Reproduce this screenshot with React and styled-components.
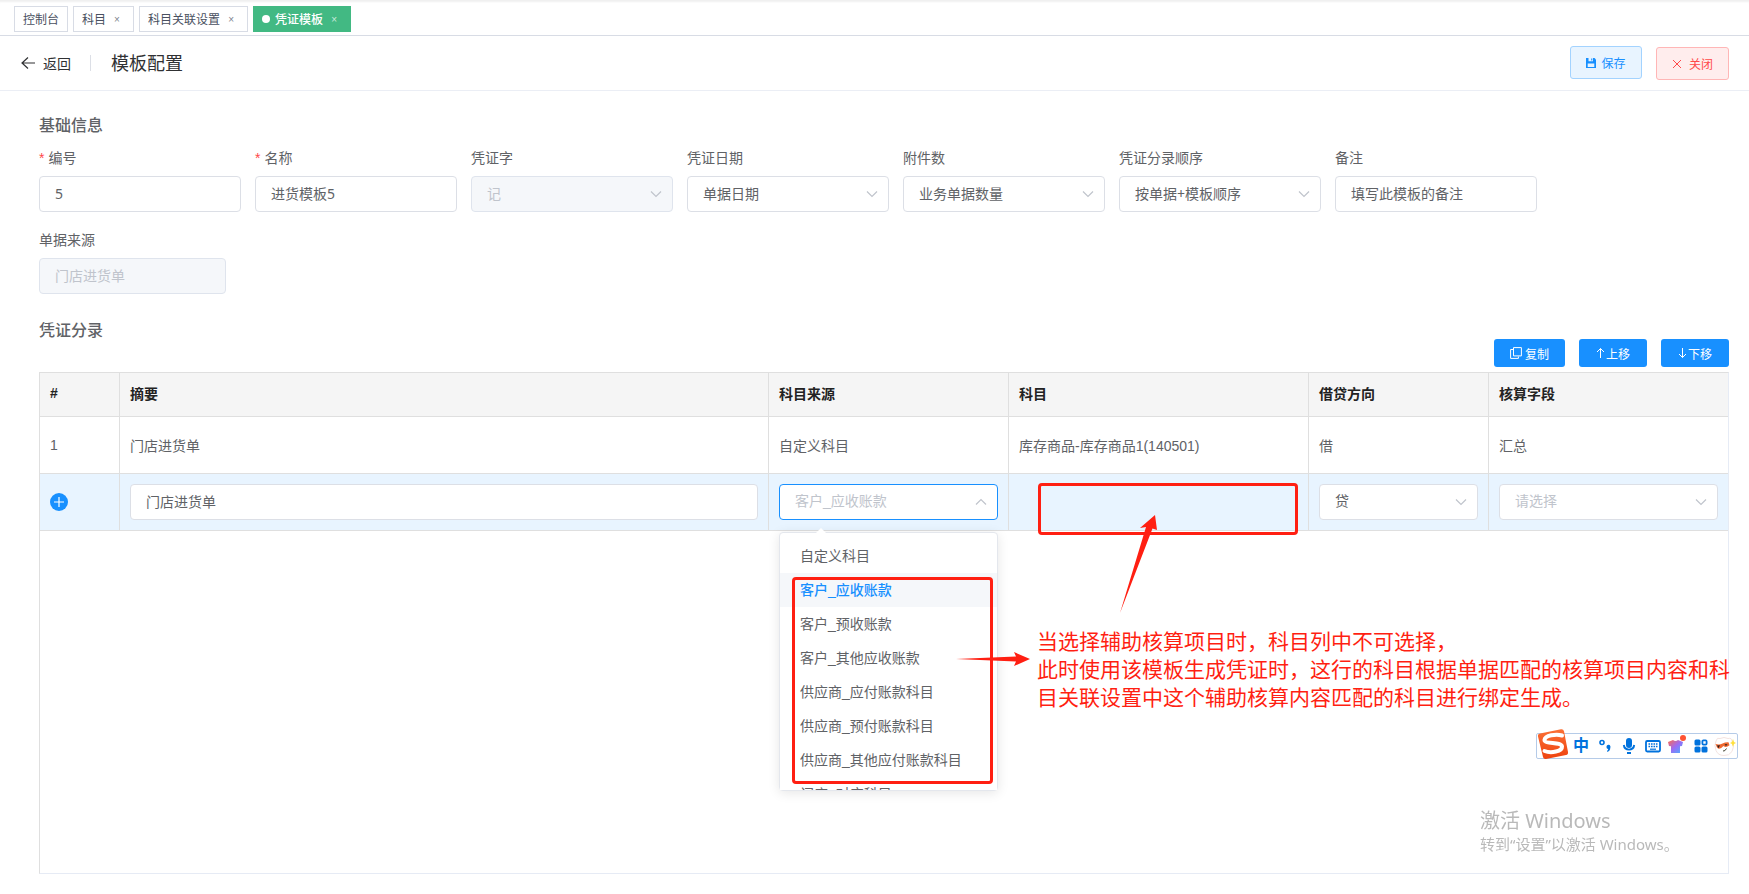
import React, { useState } from "react";
import styled, { createGlobalStyle, css } from "styled-components";

const tabs = [
  { name: "控制台" },
  { name: "科目", closable: true },
  { name: "科目关联设置", closable: true },
  { name: "凭证模板", closable: true, active: true },
];

const fields = [
  { id: "code", label: "编号", value: "5", required: true },
  { id: "name", label: "名称", value: "进货模板5", required: true },
  { id: "word", label: "凭证字", value: "记", type: "select", disabled: true },
  { id: "date", label: "凭证日期", value: "单据日期", type: "select" },
  { id: "attach", label: "附件数", value: "业务单据数量", type: "select" },
  { id: "order", label: "凭证分录顺序", value: "按单据+模板顺序", type: "select" },
  { id: "remark", label: "备注", value: "填写此模板的备注" },
  { id: "source", label: "单据来源", value: "门店进货单", disabled: true },
];

const sources = [
  "自定义科目",
  "客户_应收账款",
  "客户_预收账款",
  "客户_其他应收账款",
  "供应商_应付账款科目",
  "供应商_预付账款科目",
  "供应商_其他应付账款科目",
  "门店_对应科目",
];

const Chevron = ({ up }) => (
  <ChevronIcon viewBox="0 0 12 12" aria-hidden="true">
    <path d={up ? "M1 8.5 6 3.5 11 8.5" : "M1 3.5 6 8.5 11 3.5"} />
  </ChevronIcon>
);

const Select = ({ options, open, muted, ...rest }) => (
  <SelectBox>
    <Control as="select" $open={open} $muted={muted} {...rest}>
      {options.map((option) => (
        <option key={option}>{option}</option>
      ))}
    </Control>
    <Chevron up={open} />
  </SelectBox>
);

const Field = ({ id, label, value, required, disabled, type }) => (
  <FieldBox>
    <Label htmlFor={id}>
      {required && <Star>*</Star>}
      {label}
    </Label>
    {type === "select" ? (
      <Select id={id} options={[value]} disabled={disabled} />
    ) : (
      <Control id={id} defaultValue={value} disabled={disabled} />
    )}
  </FieldBox>
);

const TabsBar = () => (
  <Tabs>
    {tabs.map(({ name, closable, active }) => (
      <Tab key={name} href="#" $active={active}>
        {active && <Dot />}
        {name}
        {closable && <TabClose>×</TabClose>}
      </Tab>
    ))}
  </Tabs>
);

const ImeBar = () => (
  <Ime>
    <svg className="logo" width="32" height="32" viewBox="0 0 32 32">
      <defs>
        <linearGradient id="sogou" x1="0" y1="0" x2="0" y2="1">
          <stop offset="0" stopColor="#fb7035" />
          <stop offset="1" stopColor="#ee4310" />
        </linearGradient>
      </defs>
      <path
        d="M3 5.500 24 1.200q2.400-.400 3 2l4 20.800q.400 2.500-2 3L9 31q-2.500.400-3-2L1 8.500q-.500-2.500 2-3Z"
        fill="url(#sogou)"
      />
      <path
        d="M25 7.500C19 5.500 8 7.500 7.500 12c-.300 4.500 17 1.500 17.500 6.500.300 5-11 7-17.500 4.500"
        fill="none"
        stroke="#fff"
        strokeWidth="4"
        strokeLinecap="round"
      />
    </svg>
    <ImeMode>中</ImeMode>
    <svg width="14" height="14" viewBox="0 0 14 14">
      <circle cx="4" cy="3.500" r="2" fill="none" stroke="#0072dd" strokeWidth="1.600" />
      <path d="M8.500 8a2 2 0 1 1 3.800.700c0 2-1.200 3.600-2.800 4.300l-.500-1c.800-.500 1.200-1.200 1.200-2-1 0-1.700-.900-1.700-2Z" fill="#0072dd" />
    </svg>
    <svg width="14" height="18" viewBox="0 0 14 18">
      <rect x="4" y="1" width="6" height="10" rx="3" fill="#0072dd" />
      <path d="M1.800 8c.400 3 2.500 4.600 5.200 4.600S11.800 11 12.200 8M5 16h4" fill="none" stroke="#0072dd" strokeWidth="1.900" />
    </svg>
    <svg width="16" height="14" viewBox="0 0 16 14">
      <rect x="1" y="2" width="14" height="10.500" rx="1.200" fill="none" stroke="#0072dd" strokeWidth="1.800" />
      <path d="M3.500 5h9M3.500 7.500h9" stroke="#0072dd" strokeWidth="1.400" strokeDasharray="1.600 .9" />
      <path d="M5 10.200h6" stroke="#0072dd" strokeWidth="1.200" />
    </svg>
    <svg width="20" height="22" viewBox="0 0 20 22">
      <defs>
        <linearGradient id="shirt" x1="0" y1="0" x2="1" y2="1">
          <stop offset="0" stopColor="#ff6a4a" />
          <stop offset=".5" stopColor="#9b6cf5" />
          <stop offset="1" stopColor="#45b4ff" />
        </linearGradient>
      </defs>
      <path d="M1 7 6 5q2.500 2 5 0l5 2-1 4-2 .300V18H4v-6.700L2 11Z" fill="url(#shirt)" />
      <circle cx="16" cy="3" r="3" fill="#ff5332" />
    </svg>
    <svg width="14" height="14" viewBox="0 0 14 14" fill="#0072dd">
      <rect x="0.500" y="0.500" width="6" height="6" rx="1.500" />
      <rect x="8.400" y="1.400" width="4.200" height="4.200" rx="1" fill="none" stroke="#0072dd" strokeWidth="1.800" />
      <rect x="0.500" y="7.500" width="6" height="6" rx="1.500" />
      <rect x="7.500" y="7.500" width="6" height="6" rx="1.500" />
    </svg>
    <svg width="22" height="22" viewBox="0 0 22 22">
      <path d="M2 6Q3 2 6 3.500q4-2 8 0 4-1 4 3 3 5 0 10-3 4.500-8 4-6 0-8-5-2-5 0-9.500Z" fill="#fff" stroke="#f3e3e0" />
      <path d="M1.500 9q4 1 7-.500 3-1.500 6-1.200l1 3q-3.500 3-6 .800-4 4.500-6.500 1.500Z" fill="#ef6a32" />
      <path d="m3 10.500 3-.300-1.500 3ZM10.500 9.300h3l-1.500 1.700Z" fill="#2c2020" />
      <path d="M9 16q2 .500 3.500-2.500" fill="none" stroke="#443" />
      <path d="m19 4 1 3 2 1-2 1-1 3-1-3-2-1 2-1Z" fill="#ffe03c" />
    </svg>
  </Ime>
);

const App = () => {
  const [source, setSource] = useState("客户_应收账款");

  return (
    <Page>
      <GlobalStyle />
      <TabsBar />
      <Header>
        <Back type="button">
          <svg width="14" height="14" viewBox="0 0 14 14">
            <path d="M7 1.500 1 7l6 5.500M1 7h13" fill="none" stroke="currentColor" strokeWidth="1.200" />
          </svg>
          返回
        </Back>
        <Title>模板配置</Title>
        <HeaderButton type="button">
          <svg width="10" height="10" viewBox="0 0 10 10">
            <path d="M0 0h8.500L10 1.500V10H0Z" fill="currentColor" />
            <path d="M2.500 0h4.500v3.200H2.500ZM1.700 5.500h6.600V9H1.700Z" fill="#e8f4ff" />
            <path d="M5.200.500h1.100v2H5.200Z" fill="currentColor" />
          </svg>
          保存
        </HeaderButton>
        <HeaderButton type="button" $danger>
          <svg width="10" height="10" viewBox="0 0 10 10">
            <path d="m1 1 8 8M9 1 1 9" stroke="currentColor" />
          </svg>
          关闭
        </HeaderButton>
      </Header>

      <Main>
        <SectionTitle>基础信息</SectionTitle>
        <Form>
          {fields.map((field) => (
            <Field key={field.id} {...field} />
          ))}
        </Form>

        <SectionTitle>凭证分录</SectionTitle>
        <Actions>
          <ActionButton type="button" $wide>
            <svg width="12" height="12" viewBox="0 0 12 12">
              <path d="M3.500.600h7.900v8.300H3.500ZM3 2.500H.600v8.900h7.800V9.500" />
            </svg>
            复制
          </ActionButton>
          <ActionButton type="button">
            <svg width="9" height="12" viewBox="0 0 9 12">
              <path d="M4.500 11V1.500M1 5l3.500-3.500L8 5" />
            </svg>
            上移
          </ActionButton>
          <ActionButton type="button">
            <svg width="9" height="12" viewBox="0 0 9 12">
              <path d="M4.500 1v9.500M1 7l3.500 3.500L8 7" />
            </svg>
            下移
          </ActionButton>
        </Actions>

        <TableFrame>
          <Table>
            <colgroup>
              <col width="80" />
              <col />
              <col width="240" />
              <col width="300" />
              <col width="180" />
              <col width="239" />
            </colgroup>
            <thead>
              <tr>
                <th>#</th>
                <th>摘要</th>
                <th>科目来源</th>
                <th>科目</th>
                <th>借贷方向</th>
                <th>核算字段</th>
              </tr>
            </thead>
            <tbody>
              <tr>
                <td>1</td>
                <td>门店进货单</td>
                <td>自定义科目</td>
                <td>库存商品-库存商品1(140501)</td>
                <td>借</td>
                <td>汇总</td>
              </tr>
              <EditRow>
                <td>
                  <AddButton type="button" aria-label="新增">
                    <svg width="18" height="18" viewBox="0 0 18 18">
                      <circle cx="9" cy="9" r="9" fill="#1890ff" />
                      <path d="M9 4v10M4 9h10" stroke="#fff" strokeWidth="1.200" />
                    </svg>
                  </AddButton>
                </td>
                <td>
                  <Control defaultValue="门店进货单" aria-label="摘要" />
                </td>
                <td>
                  <Select
                    options={sources}
                    value={source}
                    onChange={(e) => setSource(e.target.value)}
                    aria-label="科目来源"
                    open
                    muted
                  />
                  <Popper>
                    <OptionList>
                      {sources.map((item) => (
                        <Option
                          key={item}
                          $selected={item === source}
                          onClick={() => setSource(item)}
                        >
                          {item}
                        </Option>
                      ))}
                    </OptionList>
                    <OptionsMark />
                  </Popper>
                </td>
                <td>
                  <SubjectMark />
                </td>
                <td>
                  <Select options={["贷", "借"]} aria-label="借贷方向" />
                </td>
                <td>
                  <Select options={["请选择"]} aria-label="核算字段" muted />
                </td>
              </EditRow>
            </tbody>
          </Table>
          <Arrows width="200" height="156" viewBox="0 0 200 156">
            <path d="M0 146 60 143.500 58 139 74 146 58 153 60 148.500Z" />
            <path d="M164 100 190 14 184 15 199 2 201 17 196.500 15.500Z" />
          </Arrows>
          <Note>
            当选择辅助核算项目时，科目列中不可选择，
            <br />
            此时使用该模板生成凭证时，这行的科目根据单据匹配的核算项目内容和科目关联设置中这个辅助核算内容匹配的科目进行绑定生成。
          </Note>
        </TableFrame>
      </Main>

      <ImeBar />
      <Watermark>
        <p>激活 Windows</p>
        <small>转到“设置”以激活 Windows。</small>
      </Watermark>
    </Page>
  );
};

const GlobalStyle = createGlobalStyle`
  * {
    box-sizing: border-box;
  }
  body {
    margin: 0;
    color: #606266;
    background: #fff;
    font-family: "Liberation Sans", "Noto Sans CJK SC", sans-serif;
    font-size: 14px;
  }
  button, input, select {
    font-family: inherit;
  }
`;

const Page = styled.div`
  display: flex;
  flex-direction: column;
  min-height: 100vh;
  overflow: hidden;
`;

const Tabs = styled.nav`
  display: flex;
  gap: 5px;
  height: 36px;
  padding: 6px 14px 0;
  border-bottom: 1px solid #d8dce5;
  box-shadow: inset 0 3px 2px -1px #f0f0f0;
`;

const Tab = styled.a`
  display: flex;
  align-items: center;
  height: 26px;
  padding: 0 8px 2px;
  border: 1px solid ${({ $active }) => ($active ? "#42b983" : "#d8dce5")};
  color: ${({ $active }) => ($active ? "#fff" : "#495060")};
  background: ${({ $active }) => ($active ? "#42b983" : "#fff")};
  font-size: 12px;
  font-weight: ${({ $active }) => ($active ? 500 : 400)};
  text-decoration: none;
`;

const Dot = styled.span`
  width: 8px;
  height: 8px;
  margin: 2px 5px 0 0;
  border-radius: 50%;
  background: #fff;
`;

const TabClose = styled.span`
  width: 16px;
  margin: 2px 0 0 3px;
  font-size: 10px;
  text-align: center;
  opacity: 0.7;
`;

const Header = styled.header`
  display: flex;
  align-items: center;
  height: 55px;
  padding: 0 20px 1px 21px;
  border-bottom: 1px solid #ebeef5;
`;

const Back = styled.button`
  display: flex;
  align-items: center;
  gap: 8px;
  height: 16px;
  padding: 0 19px 0 0;
  border: 0;
  border-right: 1px solid #dcdfe6;
  color: #303133;
  background: none;
  font-size: 14px;
`;

const Title = styled.h1`
  flex: 1;
  margin: 0 0 2px 20px;
  color: #303133;
  font-size: 18px;
  font-weight: 400;
`;

const HeaderButton = styled.button`
  display: flex;
  align-items: center;
  justify-content: center;
  gap: 5px;
  width: 72px;
  height: 33px;
  border: 1px solid #a3d3ff;
  border-radius: 3px;
  color: #1890ff;
  background: #e8f4ff;
  font-size: 12px;

  ${({ $danger }) =>
    $danger &&
    css`
      gap: 7px;
      width: 73px;
      margin: 2px 0 0 14px;
      border-color: #ffb6b6;
      color: #ff4949;
      background: #ffeded;
    `}
`;

const Main = styled.main`
  flex: 1;
  display: flex;
  flex-direction: column;
  padding: 24px 20px 20px 39px;
`;

const SectionTitle = styled.h2`
  margin: 0;
  font-size: 16px;
  font-weight: 500;
  line-height: 22px;
`;

const Form = styled.div`
  display: grid;
  grid-template-columns: repeat(7, 202fr) 178fr;
  column-gap: 14px;
  row-gap: 7px;
  margin-bottom: 26px;
  font-family: "Noto Sans", "Noto Sans CJK SC", sans-serif;

  & > :last-child {
    grid-column: 1;
    margin-right: 15px;
  }
`;

const FieldBox = styled.div`
  display: flex;
  flex-direction: column;
`;

const Label = styled.label`
  padding-top: 3px;
  line-height: 36px;
`;

const Star = styled.span`
  margin-right: 4px;
  color: #ff4949;
  font-family: "Liberation Sans", sans-serif;
`;

const Control = styled.input`
  display: block;
  width: 100%;
  height: 36px;
  padding: 0 15px 2px;
  border: 1px solid ${({ $open }) => ($open ? "#1890ff" : "#dcdfe6")};
  border-radius: 4px;
  outline: none;
  appearance: none;
  color: ${({ $muted }) => ($muted ? "#c0c4cc" : "#606266")};
  background: #fff;
  font-size: 14px;

  &:disabled {
    border-color: #dfe4ed;
    color: #c0c4cc;
    background: #f5f7fa;
    opacity: 1;
  }
`;

const SelectBox = styled.div`
  position: relative;
`;

const ChevronIcon = styled.svg`
  position: absolute;
  top: 12px;
  right: 11px;
  width: 12px;
  height: 12px;
  fill: none;
  stroke: #c0c4cc;
  stroke-width: 1.2;
  pointer-events: none;
`;

const Actions = styled.div`
  display: flex;
  justify-content: flex-end;
  gap: 14px;
  margin: -3px 0 5px;
`;

const ActionButton = styled.button`
  display: flex;
  align-items: center;
  justify-content: center;
  gap: ${({ $wide }) => ($wide ? 3 : 1)}px;
  width: ${({ $wide }) => ($wide ? 71 : 68)}px;
  height: 28px;
  padding: 0;
  border: 0;
  border-radius: 3px;
  color: #fff;
  background: #1890ff;
  font-size: 12px;

  svg {
    fill: none;
    stroke: currentColor;
  }
`;

const TableFrame = styled.div`
  position: relative;
  flex: 1;
  border: 1px solid #e6ebf5;
  border-top-color: #dfdfdf;
  border-left-color: #dfdfdf;
`;

const Table = styled.table`
  width: 100%;
  border-collapse: separate;
  border-spacing: 0;
  table-layout: fixed;

  th,
  td {
    position: relative;
    padding: 0 10px;
    border-right: 1px solid #dfdfdf;
    border-bottom: 1px solid #dfdfdf;
    text-align: left;
  }
  th:last-child,
  td:last-child {
    border-right: 0;
  }
  th {
    height: 44px;
    padding-bottom: 3px;
    color: #222;
    background: #f5f5f5;
    font-weight: 700;
  }
  td {
    height: 57px;
  }
`;

const EditRow = styled.tr`
  background: #e8f4ff;
`;

const AddButton = styled.button`
  display: block;
  width: 18px;
  height: 18px;
  padding: 0;
  border: 0;
  background: none;
`;

const Popper = styled.div`
  position: absolute;
  z-index: 2;
  top: 58px;
  left: 10px;
  right: 10px;
  border: 1px solid #e4e7ed;
  border-radius: 4px;
  background: #fff;
  box-shadow: 0 2px 12px rgba(0, 0, 0, 0.1);

  &::before {
    content: "";
    position: absolute;
    top: -5px;
    left: 35px;
    border: 6px solid transparent;
    border-top: 0;
    border-bottom-color: #fff;
  }
`;

const OptionList = styled.ul`
  height: 257px;
  margin: 0;
  padding: 6px 0;
  overflow-y: auto;
  scrollbar-width: none;
  list-style: none;
`;

const Option = styled.li`
  padding: 0 20px;
  color: ${({ $selected }) => ($selected ? "#1890ff" : "#606266")};
  background: ${({ $selected }) => ($selected ? "#f5f7fa" : "#fff")};
  font-weight: ${({ $selected }) => ($selected ? 500 : 400)};
  line-height: 34px;
  white-space: nowrap;
`;

// red annotation frames
const Mark = styled.div`
  position: absolute;
  border: 3px solid #ff1f12;
  border-radius: 4px;
  pointer-events: none;
`;

const OptionsMark = styled(Mark)`
  inset: 44px 4px 6px 12px;
`;

const SubjectMark = styled(Mark)`
  z-index: 1;
  inset: 9px 10px -5px 29px;
`;

const Arrows = styled.svg`
  position: absolute;
  z-index: 3;
  top: 140px;
  right: 572px;
  fill: #ff1f12;
  overflow: visible;
  pointer-events: none;
`;

const Note = styled.p`
  position: absolute;
  top: 255px;
  right: -4px;
  width: 695px;
  margin: 0;
  color: #ff1f12;
  font-size: 21px;
  line-height: 28px;
`;

const Ime = styled.div`
  position: fixed;
  z-index: 4;
  right: 11px;
  bottom: 135px;
  display: grid;
  grid-template-columns: 32px repeat(7, 24px);
  place-items: center;
  height: 26px;
  border: 1px solid #b5cbe8;
  border-radius: 2px;
  background: #fff;

  .logo {
    margin: -8px 0 -4px;
  }
`;

const ImeMode = styled.span`
  color: #0072dd;
  font-size: 16px;
  font-weight: 700;
  line-height: 24px;
`;

const Watermark = styled.div`
  position: fixed;
  right: 20px;
  bottom: 39px;
  width: 249px;
  color: #b9b9b9;
  font-family: "Noto Sans", "Noto Sans CJK SC", sans-serif;

  p {
    margin: 0;
    font-size: 20px;
    line-height: 24px;
  }
  small {
    display: block;
    font-size: 15px;
    line-height: 22px;
  }
`;

export default App;
